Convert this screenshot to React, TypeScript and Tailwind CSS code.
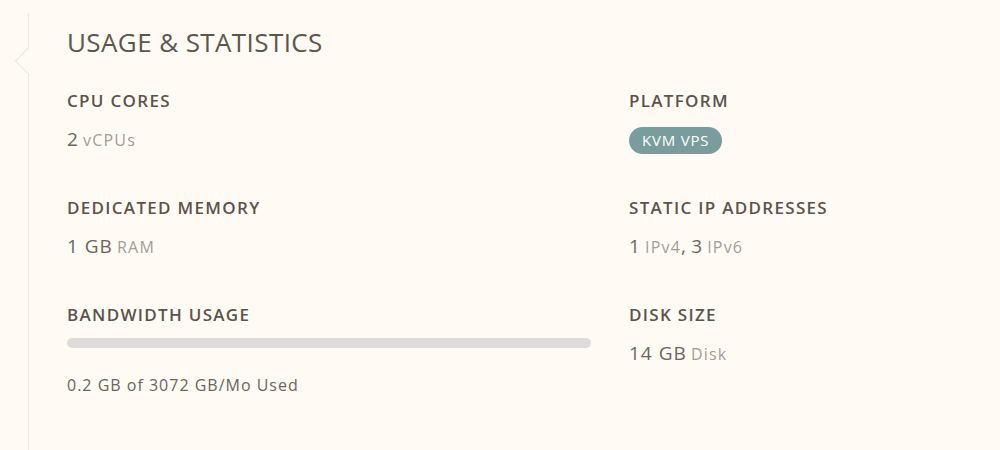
import React from 'react';

const Label = ({ children }: { children: React.ReactNode }) => (
  <div className="text-[17px] leading-6 font-semibold tracking-[1.3px] text-[#5b534c]">{children}</div>
);

const Stat = ({ label, children }: { label: string; children: React.ReactNode }) => (
  <div>
    <Label>{label}</Label>
    <div className="mt-[14px] leading-6">{children}</div>
  </div>
);

const Num = ({ children }: { children: React.ReactNode }) => (
  <span className="text-[19px] tracking-[1px] text-[#6a6560]">{children}</span>
);

const Unit = ({ children }: { children: React.ReactNode }) => (
  <span className="text-[16px] tracking-[1.2px] text-[#a29d97]">{children}</span>
);

const App = () => {
  return (
    <div
      className="h-[450px] w-[1000px] overflow-hidden bg-[#fffbf4] pl-[28px] pt-[13px]"
      style={{ fontFamily: '"Open Sans", "Noto Sans", sans-serif' }}
    >
      <div className="relative h-full border-l border-[#ece6dc] pl-[38px] pt-[13px]">
        {/* arrow notch on the left edge */}
        <div className="absolute left-[-10px] top-[38px] h-[20px] w-[20px] rotate-45 border-b border-l border-[#ece6dc] bg-[#fffbf4]" />

        <h2 className="text-[26px] leading-8 tracking-[0.4px] text-[#5c5650]">USAGE &amp; STATISTICS</h2>

        <div className="mt-[31px] grid grid-cols-[524px_1fr] grid-rows-[62px_62px_auto] gap-x-[38px] gap-y-[45px]">
          <Stat label="CPU CORES">
            <Num>2</Num> <Unit>vCPUs</Unit>
          </Stat>
          <div>
            <Label>PLATFORM</Label>
            <div className="mt-[14px]">
              <span className="inline-flex h-[27px] items-center rounded-full bg-[#799d9d] px-[13px] text-[15px] tracking-[0.8px] text-white">
                KVM VPS
              </span>
            </div>
          </div>

          <Stat label="DEDICATED MEMORY">
            <Num>1 GB</Num> <Unit>RAM</Unit>
          </Stat>
          <Stat label="STATIC IP ADDRESSES">
            <Num>1</Num> <Unit>IPv4</Unit>
            <Num>,</Num> <Num>3</Num> <Unit>IPv6</Unit>
          </Stat>

          <div>
            <Label>BANDWIDTH USAGE</Label>
            <div className="mt-[11px] h-[10px] w-full rounded-full bg-[#dedcda]" />
            <div className="mt-[26px] text-[16px] leading-[22px] tracking-[1px] text-[#6a6560]">0.2 GB of 3072 GB/Mo Used</div>
          </div>
          <Stat label="DISK SIZE">
            <Num>14 GB</Num> <Unit>Disk</Unit>
          </Stat>
        </div>
      </div>
    </div>
  );
};

export default App;
